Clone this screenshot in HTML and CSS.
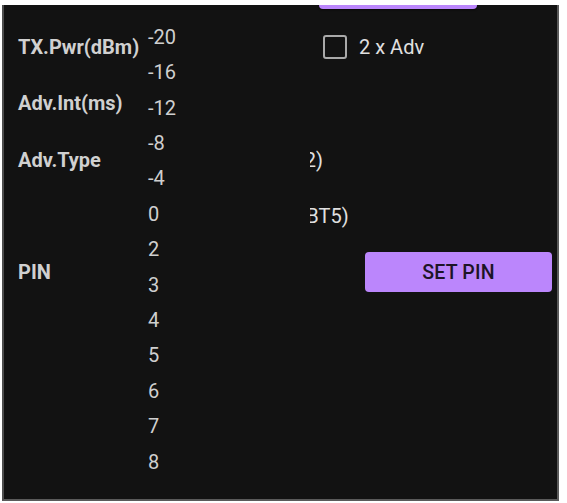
FILE: index.html
```html
<!DOCTYPE html>
<html>
<head>
<meta charset="utf-8">
<link rel="stylesheet" href="styles.css">
</head>
<body>
<div class="panel">
  <div class="top-row"><button class="btn btn-top" aria-label="Start advertising"></button></div>
  <div class="form">
    <div class="row r1">
      <div class="label">TX.Pwr(dBm)</div>
      <div class="field"></div>
      <label class="check"><span class="box"></span><span>2 x Adv</span></label>
    </div>
    <div class="row r2">
      <div class="label">Adv.Int(ms)</div>
      <div class="field"></div>
      <div></div>
    </div>
    <div class="row r3">
      <div class="label">Adv.Type</div>
      <div class="options">
        <div class="opt"><span class="radio"></span><span>Legacy (BT4.2)</span></div>
        <div class="opt"><span class="radio"></span><span>Long Range (BT5)</span></div>
      </div>
    </div>
    <div class="row r4">
      <div class="label">PIN</div>
      <div class="field"></div>
      <div class="btn-cell"><button class="btn btn-pin">SET PIN</button></div>
    </div>
  </div>
  <ul class="menu">
    <li>-20</li><li>-16</li><li>-12</li><li>-8</li><li>-4</li><li>0</li><li>2</li>
    <li>3</li><li>4</li><li>5</li><li>6</li><li>7</li><li>8</li>
  </ul>
</div>
</body>
</html>
```
FILE: styles.css
```css
* { box-sizing: border-box; }
html, body { margin: 0; padding: 0; background: #ffffff; }
body { font-family: Roboto, "Noto Sans", sans-serif; }

.panel {
  position: relative;
  margin: 5px 8px 0 2px;
  height: 496px;
  background: #121212;
  border-left: 2px solid #4e4e4e;
  border-right: 2px solid #5a5a5a;
  border-bottom: 2px solid #5a5a5a;
  overflow: hidden;
}

.top-row {
  height: 4px;
  display: flex;
  padding-left: 315px;
  align-items: flex-end;
}
.btn {
  font-family: Roboto, sans-serif;
  font-weight: 500;
  font-size: 19.5px;
  color: #1d1426;
  background: #bb86fc;
  border: none;
  border-radius: 4px;
  letter-spacing: 0.2px;
}
.btn-top {
  width: 158px;
  height: 40px;
  flex: none;
  box-shadow: 0 1px 2px rgba(0,0,0,0.6);
}

.form { padding-left: 14px; }
.row {
  display: grid;
  grid-template-columns: 130px 171px 1fr;
  align-items: center;
}
.r1 { height: 76px; }
.r2 { height: 36px; margin-bottom: 11px; }
.r3 { height: 112px; align-items: start; }
.r3 .label { height: 56px; display: flex; align-items: center; }
.r4 { height: 56px; }

.label {
  color: #d0d0d0;
  font-weight: 700;
  font-size: 20px;
  white-space: nowrap;
}

.check {
  display: flex;
  align-items: center;
  gap: 12px;
  padding-left: 4px;
  color: #e0e0e0;
  font-size: 20px;
}
.box {
  width: 24px;
  height: 24px;
  border: 2px solid #a9a9a9;
  border-radius: 3px;
}

.options { grid-column: 2 / 4; }
.opt {
  height: 56px;
  display: flex;
  align-items: center;
  gap: 10px;
  color: #e0e0e0;
  font-size: 20px;
  padding-left: 11px;
}
.radio {
  width: 20px;
  height: 20px;
  border: 2px solid #aaa;
  border-radius: 50%;
}

.btn-cell { padding-left: 46px; padding-right: 5px; }
.btn-pin { width: 187px; height: 40px; display: block; }

.menu {
  position: absolute;
  left: 136px;
  top: 6px;
  width: 170px;
  margin: 0;
  padding: 8px 0;
  list-style: none;
  background: #121212;
}
.menu li {
  height: 35.42px;
  display: flex;
  align-items: center;
  padding-left: 8px;
  color: #cfcfcf;
  font-size: 20px;
}
```
